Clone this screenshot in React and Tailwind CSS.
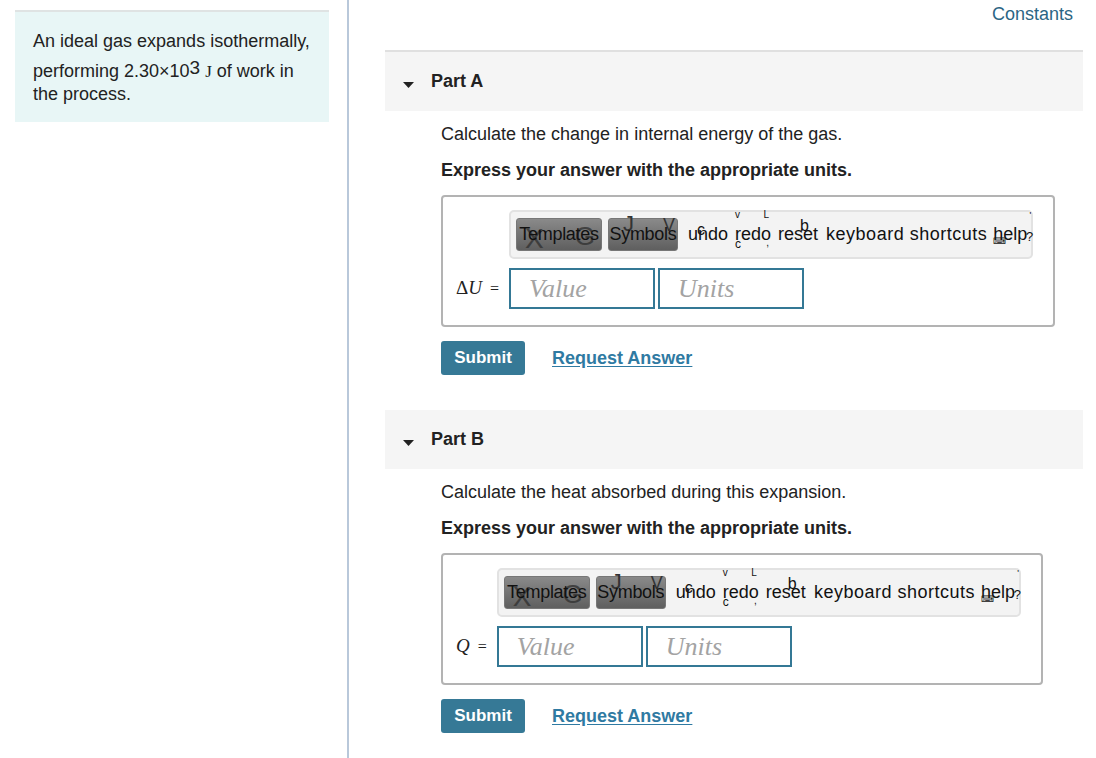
import React from "react";

function Toolbar() {
  return (
    <div className="flex h-[49px] w-[524px] items-center overflow-visible rounded-[5px] border-2 border-[#e2e2e2] bg-[#f3f3f3] pl-[5px] text-[18px] text-[#111] font-['Liberation_Sans',Arial,sans-serif] whitespace-nowrap">
      <div className="relative flex h-[33px] w-[86px] shrink-0 items-center justify-center rounded-[3px] bg-gradient-to-b from-[#8a8a8a] to-[#5f5f5f] border border-[#777]">
        <span className="absolute left-[8px] top-[6px] text-[28px] leading-none text-[#333] opacity-80">X</span>
        <span className="absolute right-[6px] top-[4px] text-[26px] leading-none text-[#333] opacity-80">G</span>
        <span className="relative tracking-[-0.3px]">Templates</span>
      </div>
      <div className="relative ml-[6px] flex h-[33px] w-[70px] shrink-0 items-center justify-center rounded-[3px] bg-gradient-to-b from-[#8a8a8a] to-[#5f5f5f] border border-[#777]">
        <span className="absolute left-[14px] top-[-6px] text-[22px] leading-none text-[#333]">J</span>
        <span className="absolute right-[2px] top-[-3px] text-[18px] leading-none text-[#333]">V</span>
        <span className="relative tracking-[-0.3px]">Symbols</span>
      </div>
      <span className="relative ml-[10px] shrink-0">
        undo
        <span className="absolute left-[9px] top-[-3px] text-[16px]">c</span>
      </span>
      <span className="relative ml-[7px] shrink-0">
        redo
        <span className="absolute left-[0px] top-[-14px] text-[10px]">v</span>
        <span className="absolute right-[2px] top-[-14px] text-[10px]">L</span>
        <span className="absolute left-[0px] top-[14px] text-[12px]">c</span>
        <span className="absolute right-[2px] top-[14px] text-[10px]">,</span>
      </span>
      <span className="relative ml-[7px] shrink-0">
        reset
        <span className="absolute left-[22px] top-[-7px] text-[16px]">b</span>
      </span>
      <span className="ml-[8px] shrink-0 tracking-[0.5px]">keyboard shortcuts</span>
      <span className="relative ml-[6px] shrink-0">
        help
        <span className="absolute left-[0px] top-[16px] text-[9px] leading-none">⌨</span>
        <span className="absolute right-[-6px] top-[6px] text-[13px]">?</span>
        <span className="absolute right-[-4px] top-[-12px] text-[9px]">'</span>
      </span>
    </div>
  );
}

function Part({ title, question, label }) {
  return (
    <div>
      <div className="flex h-[59px] items-center bg-[#f5f5f5] pl-[18px]">
        <svg width="11" height="6" viewBox="0 0 11 6" className="mt-[6px]">
          <path d="M0 0 L11 0 L5.5 6 Z" fill="#222" />
        </svg>
        <span className="ml-[17px] text-[18px] font-bold text-[#222]">{title}</span>
      </div>
      <div className="pl-[56px]">
        <div className="mt-[12px] text-[18px] leading-[22px] text-[#222] whitespace-nowrap">{question}</div>
        <div className="mt-[14px] text-[18px] font-bold leading-[22px] text-[#222] whitespace-nowrap">
          Express your answer with the appropriate units.
        </div>
        <div className="mt-[14px] flex h-[132px] w-fit rounded-[4px] border-2 border-[#b3b3b3] pb-[16px] pl-[13px] pr-[20px] pt-[13px]">
          <div className="flex flex-col">
            <div className="h-[49px]" />
            <div className="mt-[9px] flex h-[41px] items-center pr-[10px] font-['Liberation_Serif','Times_New_Roman',serif] text-[19px] text-[#222]">
              {label}
              <span className="ml-[8px] text-[16px]">=</span>
            </div>
          </div>
          <div className="flex flex-col">
            <Toolbar />
            <div className="mt-[9px] flex gap-[3px]">
              <div className="flex h-[41px] w-[146px] items-center border-2 border-[#347895] pl-[18px] font-['Liberation_Serif','Times_New_Roman',serif] text-[26px] italic text-[#a3a3a3]">
                Value
              </div>
              <div className="flex h-[41px] w-[146px] items-center border-2 border-[#347895] pl-[18px] font-['Liberation_Serif','Times_New_Roman',serif] text-[26px] italic text-[#a3a3a3]">
                Units
              </div>
            </div>
          </div>
        </div>
        <div className="mt-[14px] flex items-center">
          <button className="h-[34px] w-[84px] rounded-[3px] bg-[#367996] text-[17px] font-bold text-white">
            Submit
          </button>
          <span className="ml-[27px] text-[18px] font-bold text-[#2f7aa2] underline underline-offset-[2px]">
            Request Answer
          </span>
        </div>
      </div>
    </div>
  );
}

export default function App() {
  return (
    <div className="flex h-[758px] w-[1096px] overflow-hidden bg-white font-['Liberation_Sans',Arial,Helvetica,sans-serif] text-[#222]">
      <div className="w-[347px] shrink-0 pl-[15px] pt-[10px]">
        <div className="h-[112px] w-[314px] border-t-2 border-[#dfe3e3] bg-[#e8f6f6] pl-[18px] pt-[18px] text-[18px] leading-[22px] text-[#222] whitespace-nowrap">
          <div>An ideal gas expands isothermally,</div>
          <div className="mt-[8px]">
            performing 2.30×10<sup className="relative top-[-3px] text-[19px]">3</sup>{" "}
            <span className="font-['Liberation_Serif','Times_New_Roman',serif] text-[17px]">J</span> of work in
          </div>
          <div>the process.</div>
        </div>
      </div>
      <div className="h-full w-[2px] shrink-0 bg-[#b9c8da]" />
      <div className="flex-1 pl-[36px] pr-[13px]">
        <div className="flex h-[50px] items-start justify-end pr-[10px] pt-[3px]">
          <span className="text-[18px] leading-[22px] text-[#2b6584]">Constants</span>
        </div>
        <div className="border-t-2 border-[#e0e0e0]">
          <Part
            title="Part A"
            question="Calculate the change in internal energy of the gas."
            label={
              <span>
                Δ<span className="italic">U</span>
              </span>
            }
          />
          <div className="h-[35px]" />
          <Part
            title="Part B"
            question="Calculate the heat absorbed during this expansion."
            label={<span className="italic">Q</span>}
          />
        </div>
      </div>
    </div>
  );
}
